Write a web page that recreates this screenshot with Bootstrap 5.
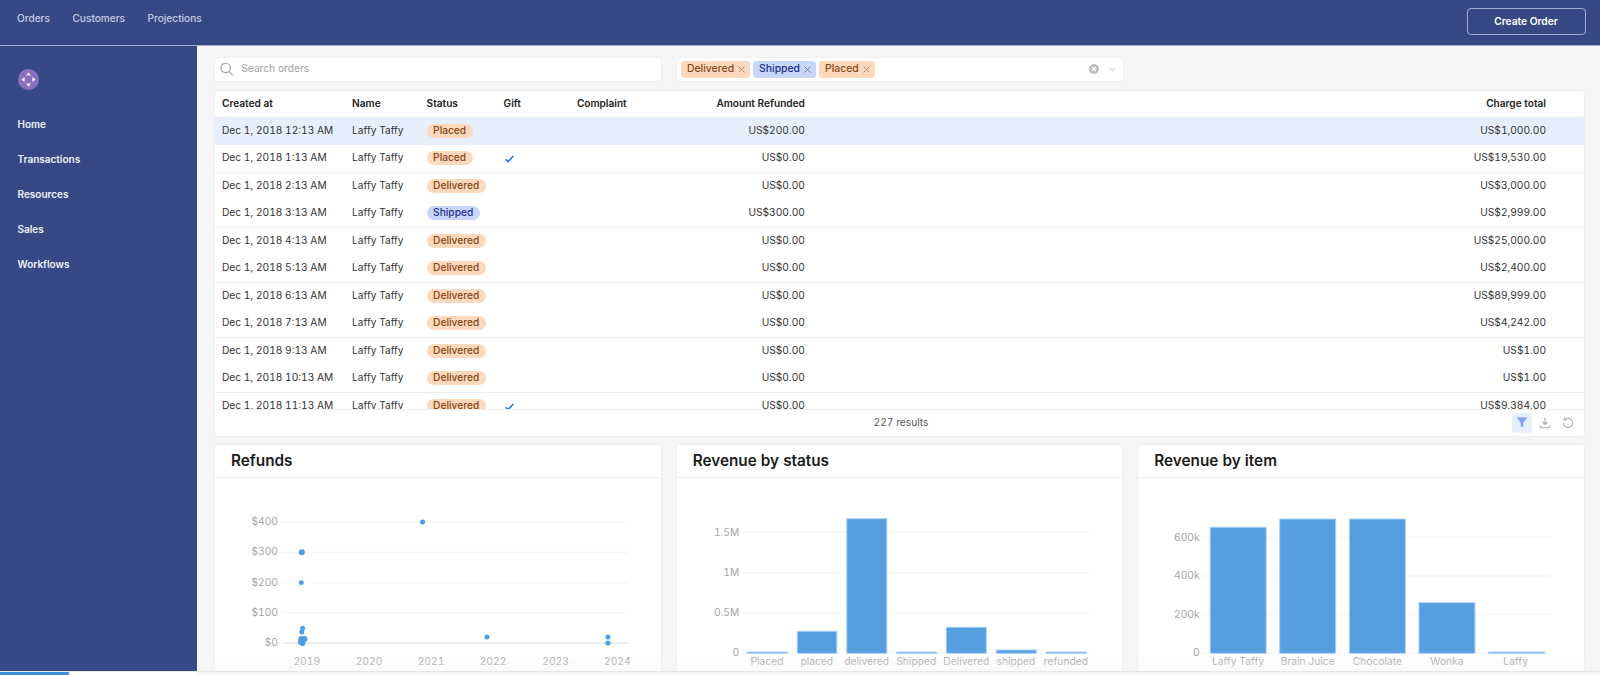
<!DOCTYPE html>
<html lang="en">
<head>
<meta charset="utf-8">
<title>Orders</title>
<link href="https://cdn.jsdelivr.net/npm/bootstrap@5.3.0/dist/css/bootstrap.min.css" rel="stylesheet">
<style>
html,body{height:675px;overflow:hidden}
body{font-family:Inter,"Liberation Sans",sans-serif;font-size:10.2px;background:#f5f5f5;color:#333;display:flex;flex-direction:column;font-variant-numeric:tabular-nums}
.topbar{--bs-navbar-nav-link-padding-x:0;height:46px;flex:none;padding:0 14.5px 0 17px;background:#364985;border-bottom:1px solid #a3b0d6;align-items:flex-start}
.topbar .navbar-nav{gap:22.5px;padding-top:12px}
.topbar .nav-link{padding:0;font-size:10.1px;line-height:13px;font-weight:500;color:#c4cce3}
.create-btn{width:119px;height:27px;margin-top:8px;padding:0;font-size:10.2px;font-weight:600;color:#fff;border:1px solid #a3b0d6;border-radius:4px;background:transparent}
.shell{flex:1 1 auto;min-height:0}
.sidebar{width:197px;flex:none;background:#364985;padding:23px 0 0 17.5px}
.logo-mark{display:block;width:21px;height:21px;margin-bottom:27.5px}
.sidebar .nav-link{padding:0;height:35.100px;font-size:10px;line-height:13px;font-weight:600;color:#eef1f8}
.content{flex:1 1 auto;min-width:0;padding:10.500px 15px 0 17px;overflow:hidden;position:relative}
.content::after{content:"";position:absolute;left:0;right:0;bottom:0;height:16px;background:linear-gradient(to bottom,rgba(245,245,245,0),rgba(245,245,245,.5))}
.field-box{height:25px;background:#fff;border:1px solid #eee;border-radius:4px}
.search-box{width:448px;padding-left:5px;margin-right:14px}
.search-input{border:0;padding:0;margin-left:8px;font-size:10.2px;background:transparent;box-shadow:none;color:#333}
.search-input::placeholder{color:#a0a0a0}
.filter-box{width:447.500px;padding-left:4px;padding-right:7px}
.tag-chip{height:17px;border-radius:3px;font-size:10.4px;font-weight:500;padding:0 5px 0 6px;margin-right:3px;gap:4px}
.tag-chip svg{flex:none}
.tone-orange{background:#fcd9bd;color:#8a4414}
.tone-blue{background:#c9d6fb;color:#1c2f8f}
.orders-card{height:347px;margin-top:8px;border:1px solid #eee;border-radius:4px;overflow:hidden}
.orders-scroll{height:319px;overflow:hidden}
.orders-table{table-layout:fixed;width:1371px;margin:0;font-size:10.2px;--bs-table-bg:transparent;color:#333}
.orders-table th,.orders-table td{height:27.5px;padding:0 7px;vertical-align:middle;white-space:nowrap;border:0;color:#333}
.orders-table th{height:26.5px;font-weight:600;font-size:10.1px;color:#222;border-bottom:1px solid #eee}
.orders-table tbody tr:nth-child(even) td{border-bottom:1px solid #eee}
.orders-table tbody tr.row-selected td{background:#e8effc}
.charge-cell{padding-right:40px!important}
.status-pill{display:inline-block;height:13.500px;line-height:13.500px;border-radius:7px;padding:0 6.5px;font-size:10.2px;font-weight:500}
.gift-mark{margin-left:1px}
.orders-foot{height:27px;border-top:1px solid #eee;color:#555;padding-right:6px}
.foot-count{flex:1;text-align:center;margin-left:78px}
.tool-btn{width:20px;height:20px;margin-left:3px;border-radius:3px}
.tool-on{background:#e8effc}
.chart-row{--bs-gutter-x:14px;margin-top:7px}
.chart-card{height:260px;border:1px solid #eee;border-radius:4px}
.chart-card .card-header{height:33px;background:#fff;border-bottom:1px solid #eee;padding:0 0 0 16px;font-size:15.300px;line-height:31px;font-weight:600;color:#1c1c1c}
.chart-card .card-body{padding:0}
.chart-svg{display:block;width:100%;height:194px}
.chart-svg text{font-family:Inter,"Liberation Sans",sans-serif;font-size:10.300px;fill:#a6a6a6;transform:translateY(-.7px)}
.grid-line{stroke:#f3f3f3;stroke-width:1}
.bar-shape{fill:#559fe1;stroke:#a9d0f5;stroke-width:1}
.dot-mark{fill:#4f9de3}
.loader-strip{height:4px;flex:none;background:#f5f5f5;border-top:1px solid #e6e6e6}
.loader-white{width:197px;background:#fff}
.loader-fill{width:69px;background:#3b8fdc}
</style>
</head>
<body>
<nav class="navbar navbar-expand topbar d-flex justify-content-between">
  <ul class="navbar-nav">
    <li class="nav-item"><a class="nav-link" href="#">Orders</a></li>
    <li class="nav-item"><a class="nav-link" href="#">Customers</a></li>
    <li class="nav-item"><a class="nav-link" href="#">Projections</a></li>
  </ul>
  <button class="btn create-btn" type="button">Create Order</button>
</nav>
<div class="shell d-flex">
  <aside class="sidebar">
    <svg class="logo-mark" viewBox="0 0 21 21"><circle cx="10.500" cy="10.500" r="10.500" fill="#8a6fc0"/><path d="M10.500 3.600 13 6.600H8zM10.500 17.400 13 14.400H8zM3.600 10.500 6.600 8v5zM17.400 10.500 14.400 8v5z" fill="#fff"/></svg>
    <div class="nav flex-column">
      <a class="nav-link" href="#">Home</a>
      <a class="nav-link" href="#">Transactions</a>
      <a class="nav-link" href="#">Resources</a>
      <a class="nav-link" href="#">Sales</a>
      <a class="nav-link" href="#">Workflows</a>
    </div>
  </aside>
  <main class="content">
    <div class="d-flex">
      <div class="field-box search-box d-flex align-items-center">
        <svg width="14" height="14" viewBox="0 0 13 13" fill="none" stroke="#a5a5a5" stroke-width="1.200"><circle cx="5.500" cy="5.500" r="4.600"/><path d="M9 9l3.400 3.400"/></svg>
        <input class="form-control search-input" type="text" placeholder="Search orders">
      </div>
      <div class="field-box filter-box d-flex align-items-center">
        <span class="badge tag-chip tone-orange d-inline-flex align-items-center">Delivered<svg width="7" height="7" viewBox="0 0 7 7" stroke="#b98a6a" stroke-width="1"><path d="M.5.5l6 6M6.500 .5l-6 6"/></svg></span>
        <span class="badge tag-chip tone-blue d-inline-flex align-items-center">Shipped<svg width="7" height="7" viewBox="0 0 7 7" stroke="#6f7fbc" stroke-width="1"><path d="M.5.5l6 6M6.500 .5l-6 6"/></svg></span>
        <span class="badge tag-chip tone-orange d-inline-flex align-items-center">Placed<svg width="7" height="7" viewBox="0 0 7 7" stroke="#b98a6a" stroke-width="1"><path d="M.5.5l6 6M6.500 .5l-6 6"/></svg></span>
        <svg class="ms-auto" width="10" height="10" viewBox="0 0 10 10"><circle cx="5" cy="5" r="5" fill="#bdbdbd"/><path d="M3 3l4 4M7 3L3 7" stroke="#fff" stroke-width="1.200"/></svg>
        <svg class="chev-mark" width="7" height="5" viewBox="0 0 7 5" fill="none" stroke="#c0c0c0" stroke-width="1" style="margin-left:10px"><path d="M.7 1l2.800 2.800L6.300 1"/></svg>
      </div>
    </div>
    <div class="card orders-card">
      <div class="orders-scroll">
        <table class="table orders-table">
          <colgroup><col style="width:130.100px"><col style="width:74.500px"><col style="width:77px"><col style="width:73.300px"><col style="width:99px"><col style="width:143px"><col></colgroup>
          <thead><tr><th>Created at</th><th>Name</th><th>Status</th><th>Gift</th><th>Complaint</th><th class="text-end">Amount Refunded</th><th class="text-end charge-cell">Charge total</th></tr></thead>
          <tbody>
            <tr class="row-selected"><td>Dec 1, 2018 12:13 AM</td><td>Laffy Taffy</td><td><span class="status-pill tone-orange">Placed</span></td><td></td><td></td><td class="text-end">US$200.00</td><td class="text-end charge-cell">US$1,000.00</td></tr>
            <tr><td>Dec 1, 2018 1:13 AM</td><td>Laffy Taffy</td><td><span class="status-pill tone-orange">Placed</span></td><td><svg class="gift-mark" width="9" height="8" viewBox="0 0 9 8" fill="none" stroke="#2a6ff0" stroke-width="1.600"><path d="M.7 4.300 3.200 6.600 8.300 1"/></svg></td><td></td><td class="text-end">US$0.00</td><td class="text-end charge-cell">US$19,530.00</td></tr>
            <tr><td>Dec 1, 2018 2:13 AM</td><td>Laffy Taffy</td><td><span class="status-pill tone-orange">Delivered</span></td><td></td><td></td><td class="text-end">US$0.00</td><td class="text-end charge-cell">US$3,000.00</td></tr>
            <tr><td>Dec 1, 2018 3:13 AM</td><td>Laffy Taffy</td><td><span class="status-pill tone-blue">Shipped</span></td><td></td><td></td><td class="text-end">US$300.00</td><td class="text-end charge-cell">US$2,999.00</td></tr>
            <tr><td>Dec 1, 2018 4:13 AM</td><td>Laffy Taffy</td><td><span class="status-pill tone-orange">Delivered</span></td><td></td><td></td><td class="text-end">US$0.00</td><td class="text-end charge-cell">US$25,000.00</td></tr>
            <tr><td>Dec 1, 2018 5:13 AM</td><td>Laffy Taffy</td><td><span class="status-pill tone-orange">Delivered</span></td><td></td><td></td><td class="text-end">US$0.00</td><td class="text-end charge-cell">US$2,400.00</td></tr>
            <tr><td>Dec 1, 2018 6:13 AM</td><td>Laffy Taffy</td><td><span class="status-pill tone-orange">Delivered</span></td><td></td><td></td><td class="text-end">US$0.00</td><td class="text-end charge-cell">US$89,999.00</td></tr>
            <tr><td>Dec 1, 2018 7:13 AM</td><td>Laffy Taffy</td><td><span class="status-pill tone-orange">Delivered</span></td><td></td><td></td><td class="text-end">US$0.00</td><td class="text-end charge-cell">US$4,242.00</td></tr>
            <tr><td>Dec 1, 2018 9:13 AM</td><td>Laffy Taffy</td><td><span class="status-pill tone-orange">Delivered</span></td><td></td><td></td><td class="text-end">US$0.00</td><td class="text-end charge-cell">US$1.00</td></tr>
            <tr><td>Dec 1, 2018 10:13 AM</td><td>Laffy Taffy</td><td><span class="status-pill tone-orange">Delivered</span></td><td></td><td></td><td class="text-end">US$0.00</td><td class="text-end charge-cell">US$1.00</td></tr>
            <tr><td>Dec 1, 2018 11:13 AM</td><td>Laffy Taffy</td><td><span class="status-pill tone-orange">Delivered</span></td><td><svg class="gift-mark" width="9" height="8" viewBox="0 0 9 8" fill="none" stroke="#2a6ff0" stroke-width="1.600"><path d="M.7 4.300 3.200 6.600 8.300 1"/></svg></td><td></td><td class="text-end">US$0.00</td><td class="text-end charge-cell">US$9,384.00</td></tr>
          </tbody>
        </table>
      </div>
      <div class="orders-foot d-flex align-items-center">
        <span class="foot-count">227 results</span>
        <span class="tool-btn tool-on d-flex align-items-center justify-content-center"><svg width="12" height="11" viewBox="0 0 12 11"><path d="M.5.500h11L7.300 5.500V10.500L4.700 9V5.500z" fill="#7f9ff2"/></svg></span>
        <span class="tool-btn d-flex align-items-center justify-content-center"><svg width="12" height="12" viewBox="0 0 12 12" fill="none" stroke="#aaa" stroke-width="1.100"><path d="M6 .8v6.400M3.600 5 6 7.400 8.400 5M1 8.500c0 1.500.6 2.300 2 2.300h6c1.400 0 2-.8 2-2.300"/></svg></span>
        <span class="tool-btn d-flex align-items-center justify-content-center"><svg width="12" height="12" viewBox="0 0 12 12" fill="none" stroke="#aaa" stroke-width="1.100"><path d="M2.700 2.700A4.600 4.600 0 1 1 1.400 6M2.300.6v2.400h2.400"/></svg></span>
      </div>
    </div>
    <div class="row chart-row">
      <div class="col-4">
        <div class="card chart-card">
          <div class="card-header">Refunds</div>
          <div class="card-body">
            <svg class="chart-svg" viewBox="215 477 445.700 194">
              <g class="grid-line"><path d="M281.600 521H628M281.600 551.300H628M281.600 581.700H628M281.600 611.700H628"/></g>
              <path d="M281.600 642H628" stroke="#e6e6e6" stroke-width="1.500"/>
              <g text-anchor="end"><text x="278" y="525">$400</text><text x="278" y="555">$300</text><text x="278" y="585.500">$200</text><text x="278" y="615.500">$100</text><text x="278" y="646">$0</text></g>
              <g text-anchor="middle"><text x="306.800" y="665">2019</text><text x="369" y="665">2020</text><text x="431" y="665">2021</text><text x="493" y="665">2022</text><text x="555.600" y="665">2023</text><text x="617.400" y="665">2024</text></g>
              <g class="dot-mark"><circle cx="422.600" cy="521" r="2.500"/><circle cx="301.800" cy="551.300" r="3"/><circle cx="301.300" cy="581.700" r="2.500"/><circle cx="302.600" cy="627.300" r="2.500"/><circle cx="301.800" cy="631" r="2.500"/><circle cx="301.300" cy="638" r="3"/><circle cx="304.500" cy="638" r="3"/><circle cx="302.500" cy="642" r="3"/><circle cx="301" cy="641" r="3"/><circle cx="487" cy="636" r="2.500"/><circle cx="608" cy="636" r="2.500"/><circle cx="608" cy="642" r="2.500"/></g>
            </svg>
          </div>
        </div>
      </div>
      <div class="col-4">
        <div class="card chart-card">
          <div class="card-header">Revenue by status</div>
          <div class="card-body">
            <svg class="chart-svg" viewBox="676.700 477 445.700 194">
              <g class="grid-line"><path d="M741.700 531.300H1090M741.700 571.700H1090M741.700 612H1090M741.700 652.300H1090"/></g>
              <g text-anchor="end"><text x="739" y="535.500">1.5M</text><text x="739" y="576">1M</text><text x="739" y="616">0.5M</text><text x="739" y="656">0</text></g>
              <g class="bar-shape"><rect x="747" y="651" width="40" height="1.300"/><rect x="797" y="630.300" width="39.500" height="22"/><rect x="846.500" y="517.700" width="40" height="134.600"/><rect x="896.500" y="651" width="40" height="1.300"/><rect x="946" y="626.300" width="40" height="26"/><rect x="996" y="649" width="40" height="3.300"/><rect x="1046" y="651" width="40" height="1.300"/></g>
              <g text-anchor="middle"><text x="766.700" y="665">Placed</text><text x="816.500" y="665">placed</text><text x="866.300" y="665">delivered</text><text x="916" y="665">Shipped</text><text x="966" y="665">Delivered</text><text x="1015.700" y="665">shipped</text><text x="1065.700" y="665">refunded</text></g>
            </svg>
          </div>
        </div>
      </div>
      <div class="col-4">
        <div class="card chart-card">
          <div class="card-header">Revenue by item</div>
          <div class="card-body">
            <svg class="chart-svg" viewBox="1138.300 477 445.700 194">
              <g class="grid-line"><path d="M1201.700 536.300H1552M1201.700 575H1552M1201.700 613.300H1552M1201.700 652.300H1552"/></g>
              <g text-anchor="end"><text x="1200" y="540.500">600k</text><text x="1200" y="579">400k</text><text x="1200" y="617.500">200k</text><text x="1200" y="656">0</text></g>
              <g class="bar-shape"><rect x="1210.500" y="526.300" width="56" height="126"/><rect x="1280" y="518" width="56" height="134.300"/><rect x="1349.700" y="518" width="56" height="134.300"/><rect x="1419.300" y="601.700" width="56" height="50.600"/><rect x="1489" y="651" width="56" height="1.300"/></g>
              <g text-anchor="middle"><text x="1238.300" y="665">Laffy Taffy</text><text x="1308" y="665">Brain Juice</text><text x="1377.700" y="665">Chocolate</text><text x="1447.300" y="665">Wonka</text><text x="1516" y="665">Laffy</text></g>
            </svg>
          </div>
        </div>
      </div>
    </div>
  </main>
</div>
<div class="loader-strip d-flex"><div class="loader-white"><div class="loader-fill h-100"></div></div></div>
<script src="https://cdn.jsdelivr.net/npm/bootstrap@5.3.0/dist/js/bootstrap.bundle.min.js"></script>
</body>
</html>
